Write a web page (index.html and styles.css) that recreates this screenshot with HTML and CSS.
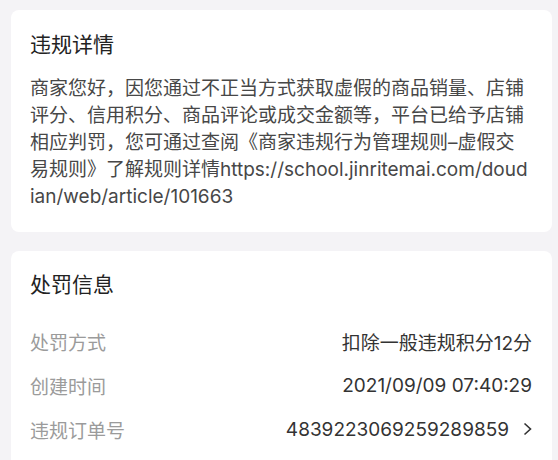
FILE: index.html
```html
<!DOCTYPE html>
<html lang="zh-CN">
<head>
  <meta charset="UTF-8" />
  <meta name="viewport" content="width=device-width, initial-scale=1.0"/>
  <title>违规详情</title>
  <link rel="stylesheet" href="styles.css">
</head>
<body>
  <!-- 违规详情 -->
  <div class="card">
    <h2 class="card-title">违规详情</h2>
    <p class="desc">商家您好，因您通过不正当方式获取虚假的商品销量、店铺评分、信用积分、商品评论或成交金额等，平台已给予店铺相应判罚，您可通过查阅《商家违规行为管理规则–虚假交易规则》了解规则详情https://school.jinritemai.com/doudian/web/article/101663</p>
  </div>

  <!-- 处罚信息 -->
  <div class="card card-info">
    <h2 class="card-title">处罚信息</h2>
    <div class="row">
      <span class="label">处罚方式</span>
      <span class="value">扣除一般违规积分12分</span>
    </div>
    <div class="row">
      <span class="label">创建时间</span>
      <span class="value">2021/09/09 07:40:29</span>
    </div>
    <div class="row">
      <span class="label">违规订单号</span>
      <span class="value">4839223069259289859
        <svg class="arrow" width="9" height="14" viewBox="0 0 9 14"><path d="M1.5 1.5 L7.5 7 L1.5 12.5" fill="none" stroke="#333" stroke-width="1.6"/></svg>
      </span>
    </div>
  </div>
</body>
</html>
```

FILE: styles.css
```css
* {
  margin: 0;
  padding: 0;
  box-sizing: border-box;
}

body {
  background: #f4f3f6;
  font-family: Inter, "Noto Sans CJK SC", sans-serif;
  padding: 10px 6px 0 11px;
  height: 460px;
  overflow: hidden;
  display: flex;
  flex-direction: column;
  gap: 19px;
}

.card {
  background: #fff;
  border-radius: 8px;
  padding: 22px 20px 22px 19px;
}

.card-title {
  font-size: 21px;
  font-weight: normal;
  line-height: 26px;
  color: #222;
}

.desc {
  margin-top: 17px;
  font-size: 19px;
  line-height: 27px;
  color: #474747;
  word-break: break-all;
}

.card-info {
  flex: 1;
  padding-top: 21px;
}

.card-info .card-title {
  margin-bottom: 21px;
}

.row {
  display: flex;
  justify-content: space-between;
  align-items: center;
  height: 44px;
  font-size: 19px;
}

.label {
  color: #9b9b9b;
}

.value {
  color: #333;
  display: flex;
  align-items: center;
}

.arrow {
  margin-left: 14px;
}
```
